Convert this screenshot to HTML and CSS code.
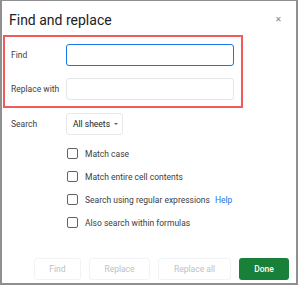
FILE: index.html
```html
<!DOCTYPE html>
<html lang="en">
<head>
    <meta charset="UTF-8">
    <title>Find and replace</title>
    <link rel="stylesheet" href="styles.css">
</head>
<body>
    <div class="dialog">
        <div class="header">
            <h1 class="title">Find and replace</h1>
            <span class="close">&#x2715;</span>
        </div>

        <div class="highlight">
            <div class="field">
                <label class="label">Find</label>
                <input class="text-input focused" type="text">
            </div>
            <div class="field">
                <label class="label">Replace with</label>
                <input class="text-input" type="text">
            </div>
        </div>

        <div class="search-row">
            <span class="label">Search</span>
            <div class="dropdown">All sheets <span class="caret"></span></div>
        </div>

        <div class="options">
            <label class="option"><span class="checkbox"></span>Match case</label>
            <label class="option"><span class="checkbox"></span>Match entire cell contents</label>
            <label class="option"><span class="checkbox"></span>Search using regular expressions <a class="help">Help</a></label>
            <label class="option"><span class="checkbox"></span>Also search within formulas</label>
        </div>

        <div class="footer">
            <button class="btn btn-find">Find</button>
            <button class="btn btn-replace">Replace</button>
            <button class="btn btn-replace-all">Replace all</button>
            <button class="btn btn-done">Done</button>
        </div>
    </div>
</body>
</html>
```
FILE: styles.css
```css
body {
    margin: 0;
    padding: 0;
    background-color: #ffffff;
    font-family: 'Roboto', 'Arial', sans-serif;
    color: #3c4043;
}

.dialog {
    box-sizing: border-box;
    width: 298px;
    height: 285px;
    border: 2px solid #8f8f8f;
    border-top-width: 1px;
    display: flex;
    flex-direction: column;
    background-color: #ffffff;
}

.header {
    height: 34px;
    display: flex;
    justify-content: space-between;
    align-items: flex-start;
    padding: 0 14px 0 7px;
    box-sizing: border-box;
}
.title {
    margin: 0;
    padding-top: 9px;
    font-size: 14px;
    line-height: 20px;
    font-weight: 400;
    color: #202124;
}
.close {
    padding-top: 14px;
    font-size: 8px;
    color: #80868b;
}

.highlight {
    box-sizing: border-box;
    width: 240px;
    height: 73px;
    margin-left: 1px;
    border: 2px solid #f35b5b;
    padding: 7px 7px 0 6px;
    display: flex;
    flex-direction: column;
    gap: 12px;
}
.field {
    display: flex;
    align-items: center;
}
.label {
    width: 55px;
    font-size: 8.5px;
    color: #3c4043;
}
.text-input {
    box-sizing: border-box;
    width: 168px;
    height: 22px;
    margin: 0;
    border: 1px solid #e3e5e8;
    border-radius: 3px;
    outline: none;
}
.text-input.focused {
    border: 1.5px solid #1a73e8;
}

.search-row {
    display: flex;
    align-items: center;
    margin-top: 5px;
    padding-left: 9px;
}
.dropdown {
    box-sizing: border-box;
    width: 57px;
    height: 22px;
    border: 1px solid #e6e8eb;
    border-radius: 3px;
    display: flex;
    align-items: center;
    padding-left: 6px;
    font-size: 8.5px;
    color: #202124;
}
.caret {
    margin-left: 4px;
    border-left: 2.5px solid transparent;
    border-right: 2.5px solid transparent;
    border-top: 2.5px solid #5f6368;
}

.options {
    margin-top: 7px;
    padding-left: 65px;
    display: flex;
    flex-direction: column;
}
.option {
    height: 23px;
    display: flex;
    align-items: center;
    font-size: 8.5px;
    color: #3c4043;
}
.checkbox {
    box-sizing: border-box;
    width: 11px;
    height: 11px;
    border: 1.5px solid #5f6368;
    border-radius: 2px;
    margin-right: 7px;
}
.help {
    margin-left: 5px;
    color: #1a73e8;
}

.footer {
    margin-top: auto;
    display: flex;
    justify-content: flex-end;
    gap: 8px;
    padding: 0 7px 3px 0;
}
.btn {
    box-sizing: border-box;
    height: 22px;
    border: 1px solid #f1f3f4;
    border-radius: 3px;
    background-color: #ffffff;
    font-family: 'Roboto', 'Arial', sans-serif;
    font-size: 8.5px;
    color: #bdc1c6;
    padding: 0;
}
.btn-find { width: 47px; }
.btn-replace { width: 61px; }
.btn-replace-all { width: 73px; }
.btn-done {
    width: 50px;
    border: none;
    background-color: #188038;
    color: #ffffff;
    font-weight: 500;
}
```
